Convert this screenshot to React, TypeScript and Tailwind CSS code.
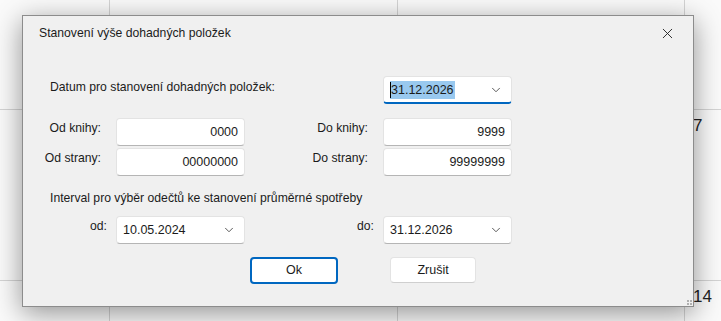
import { ChevronDown, X } from "lucide-react";

const font = { fontFamily: '"Liberation Sans", Arial, sans-serif' };

function TextBox({ value }: { value: string }) {
  return (
    <div className="h-[28px] w-[129px] bg-white rounded-[4px] border border-[#e3e3e3] border-b-[#b5b5b5] flex items-center justify-end pr-[6px] text-[12.5px] text-[#1b1b1b]">
      {value}
    </div>
  );
}

function DateBox({ value, focused }: { value: string; focused?: boolean }) {
  return (
    <div
      className={
        "h-[28px] w-[129px] bg-white rounded-[4px] border border-[#e3e3e3] flex items-center pl-[6px] pr-[8px] text-[12.5px] text-[#1b1b1b] " +
        (focused ? "border-b-2 border-b-[#0067c0]" : "border-b-[#b5b5b5]")
      }
    >
      {focused ? (
        <span className="relative bg-[#99c9ef] px-[1px] py-[2px] leading-[14px]">
          <span className="absolute left-0 top-[1px] h-[16px] w-px bg-black" />
          {value}
        </span>
      ) : (
        <span>{value}</span>
      )}
      <ChevronDown className="ml-auto w-[14px] h-[14px] text-[#444]" strokeWidth={1.5} />
    </div>
  );
}

export default function App() {
  return (
    <div className="relative w-[721px] h-[321px] overflow-hidden bg-[#fafafa]" style={font}>
      {/* calendar behind the dialog */}
      <div className="grid grid-cols-[110px_288px_287px_288px] grid-rows-[111px_171px_171px] -mt-px">
        {Array.from({ length: 12 }).map((_, i) => (
          <div key={i} className="border-r border-b border-[#d4d4d4] pl-[8px] pt-[3px] text-[17px] text-[#222]">
            {i === 7 ? "7" : i === 11 ? "14" : ""}
          </div>
        ))}
      </div>

      {/* dialog window */}
      <div className="absolute left-[22px] top-[15px] w-[672px] h-[292px] bg-[#f0f0f0] border border-[#8c8c8c] shadow-[0_6px_26px_rgba(0,0,0,0.42)] text-[#1b1b1b]">
        <div className="flex items-center h-[34px] pl-[16px] pr-[17px]">
          <span className="text-[12.2px]">Stanovení výše dohadných položek</span>
          <X className="ml-auto w-[17px] h-[17px] text-[#222]" strokeWidth={1.3} />
        </div>

        <div className="flex items-start mt-[26px] pl-[27px]">
          <span className="text-[12.2px] w-[333px] mt-[2px]">Datum pro stanovení dohadných položek:</span>
          <DateBox value="31.12.2026" focused />
        </div>

        <div className="grid grid-cols-[93px_129px_138px_129px] gap-y-[2px] mt-[14px] items-center text-[12.2px]">
          <span className="text-right pr-[15px] -mt-[8px]">Od knihy:</span>
          <TextBox value="0000" />
          <span className="text-right pr-[15px] -mt-[8px]">Do knihy:</span>
          <TextBox value="9999" />
          <span className="text-right pr-[15px] -mt-[8px]">Od strany:</span>
          <TextBox value="00000000" />
          <span className="text-right pr-[15px] -mt-[8px]">Do strany:</span>
          <TextBox value="99999999" />
        </div>

        <div className="pl-[27px] mt-[13px] text-[12.2px]">
          Interval pro výběr odečtů ke stanovení průměrné spotřeby
        </div>

        <div className="grid grid-cols-[93px_129px_138px_129px] mt-[9px] items-center text-[12.2px]">
          <span className="text-right pr-[9px] -mt-[8px]">od:</span>
          <DateBox value="10.05.2024" />
          <span className="text-right pr-[9px] -mt-[8px]">do:</span>
          <DateBox value="31.12.2026" />
        </div>

        <div className="flex mt-[13px] pl-[227px] gap-[52px] text-[12.5px]">
          <button className="h-[27px] w-[88px] bg-white rounded-[4px] border-2 border-[#0067c0]">Ok</button>
          <button className="h-[26px] w-[86px] bg-white rounded-[4px] border border-[#e3e3e3] border-b-[#cfcfcf]">Zrušit</button>
        </div>

        {/* resize grip */}
        <div className="absolute right-[1px] bottom-[1px] grid grid-cols-2 gap-[1px]">
          <span className="w-[2px] h-[2px] bg-[#b0b0b0]" />
          <span className="w-[2px] h-[2px] bg-[#b0b0b0]" />
          <span className="w-[2px] h-[2px] bg-[#b0b0b0]" />
          <span className="w-[2px] h-[2px] bg-[#b0b0b0]" />
        </div>
      </div>
    </div>
  );
}
